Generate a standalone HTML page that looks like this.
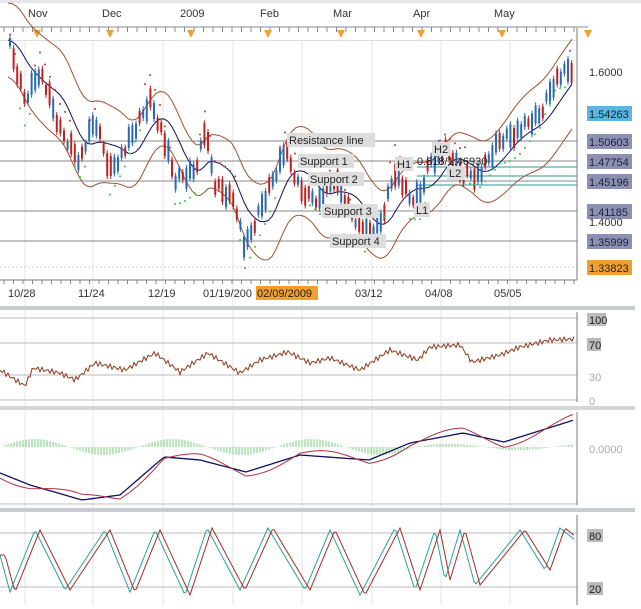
<!DOCTYPE html><html><head><meta charset="utf-8"><style>
body{margin:0;background:#fff;width:641px;height:609px;overflow:hidden;font-family:"Liberation Sans",sans-serif}
svg{display:block}
text{font-family:"Liberation Sans",sans-serif}
</style></head><body>
<svg id="s" width="641" height="609" xmlns="http://www.w3.org/2000/svg">
<rect width="641" height="609" fill="#fff"/>
<rect x="0" y="0" width="641" height="3" fill="#e4e6ea"/>
<g font-size="11" fill="#333">
<text x="28" y="17">Nov</text><text x="102" y="17">Dec</text><text x="180" y="17">2009</text><text x="260" y="17">Feb</text><text x="333" y="17">Mar</text><text x="413" y="17">Apr</text><text x="494" y="17">May</text>
</g>
<line x1="0" y1="27" x2="588" y2="27" stroke="#888"/>
<g id="ticks" stroke="#888"></g>
<g fill="#f0a030" id="tri"></g>
<rect x="0" y="40" width="577" height="1" fill="#ddd"/>
<g id="vg" stroke="#e2e4ea"></g>
<g stroke="#888" stroke-width="1">
<line x1="0" y1="141" x2="577" y2="141"/><line x1="0" y1="161" x2="577" y2="161"/><line x1="0" y1="181" x2="577" y2="181"/><line x1="0" y1="211" x2="577" y2="211"/><line x1="0" y1="241" x2="577" y2="241"/>
</g>
<g stroke="#2a9a9a"><line x1="417" y1="167" x2="577" y2="167"/><line x1="417" y1="176" x2="577" y2="176"/><line x1="417" y1="185" x2="577" y2="185"/></g>
<line x1="0" y1="267" x2="577" y2="267" stroke="#ccc" stroke-dasharray="2,2"/>
<line x1="577" y1="28" x2="577" y2="280" stroke="#777"/>
<line x1="0" y1="280" x2="577" y2="280" stroke="#777"/>
<g id="main"></g>
<g font-size="11">
<rect x="287" y="133" width="88" height="14" fill="#ddd"/><text x="289" y="144" fill="#222">Resistance line</text>
<rect x="298" y="154" width="56" height="14" fill="#ddd"/><text x="300" y="165" fill="#222">Support 1</text>
<rect x="308" y="172" width="56" height="14" fill="#ddd"/><text x="310" y="183" fill="#222">Support 2</text>
<rect x="322" y="204" width="56" height="14" fill="#ddd"/><text x="324" y="215" fill="#222">Support 3</text>
<rect x="330" y="234" width="56" height="14" fill="#ddd"/><text x="332" y="245" fill="#222">Support 4</text>
<rect x="395" y="157" width="18" height="14" fill="#ddd"/><text x="397" y="168" fill="#222">H1</text>
<rect x="432" y="142" width="18" height="14" fill="#ddd"/><text x="434" y="153" fill="#222">H2</text>
<rect x="414" y="203" width="16" height="14" fill="#ddd"/><text x="416" y="214" fill="#222">L1</text>
<rect x="447" y="166" width="18" height="14" fill="#ddd"/><text x="449" y="177" fill="#222">L2</text>
<text x="417" y="165" fill="#222">0.618/1.46930</text>
</g>
<g font-size="11">
<text x="589" y="76" fill="#333">1.6000</text>
<rect x="587" y="106" width="45" height="15" fill="#5ab4e6"/><text x="589" y="118" fill="#223">1.54263</text>
<rect x="587" y="134" width="45" height="15" fill="#8c90b4"/><text x="589" y="146" fill="#223">1.50603</text>
<rect x="587" y="154" width="45" height="15" fill="#8c90b4"/><text x="589" y="166" fill="#223">1.47754</text>
<rect x="587" y="174" width="45" height="15" fill="#8c90b4"/><text x="589" y="186" fill="#223">1.45196</text>
<rect x="587" y="204" width="45" height="15" fill="#8c90b4"/><text x="589" y="216" fill="#223">1.41185</text>
<text x="589" y="226" fill="#333">1.4000</text>
<rect x="587" y="234" width="45" height="15" fill="#8c90b4"/><text x="589" y="246" fill="#223">1.35999</text>
<rect x="587" y="260" width="45" height="15" fill="#f0a030"/><text x="589" y="272" fill="#222">1.33823</text>
</g>
<g font-size="11" fill="#333">
<text x="8" y="297">10/28</text><text x="78" y="297">11/24</text><text x="148" y="297">12/19</text><text x="203" y="297">01/19/200</text>
<rect x="256" y="286" width="62" height="14" fill="#f0a030"/><text x="257" y="297" fill="#222">02/09/2009</text>
<text x="355" y="297">03/12</text><text x="425" y="297">04/08</text><text x="494" y="297">05/05</text>
</g>
<rect x="0" y="306" width="635" height="4" fill="#c8ccd2"/>
<rect x="0" y="406" width="635" height="4" fill="#d4d6dc"/>
<rect x="0" y="508" width="635" height="4" fill="#c8ccd2"/>
<g stroke="#bbb"><line x1="0" y1="318" x2="577" y2="318"/><line x1="0" y1="343" x2="577" y2="343"/><line x1="0" y1="375" x2="577" y2="375"/><line x1="0" y1="400" x2="577" y2="400"/>
<line x1="0" y1="504" x2="577" y2="504"/>
<line x1="0" y1="533" x2="577" y2="533"/><line x1="0" y1="587" x2="577" y2="587"/></g>
<g stroke="#777"><line x1="577" y1="312" x2="577" y2="402"/><line x1="577" y1="412" x2="577" y2="505"/><line x1="577" y1="515" x2="577" y2="605"/></g>
<g font-size="11">
<rect x="587" y="313" width="19" height="13" fill="#bbb"/><text x="589" y="324" fill="#222">100</text>
<rect x="587" y="338" width="14" height="13" fill="#bbb"/><text x="589" y="349" fill="#222">70</text>
<text x="589" y="381" fill="#aaa">30</text><text x="589" y="405" fill="#aaa">0</text>
<text x="589" y="453" fill="#aaa">0.0000</text>
<rect x="587" y="529" width="16" height="13" fill="#bbb"/><text x="589" y="540" fill="#222">80</text>
<rect x="587" y="582" width="16" height="13" fill="#bbb"/><text x="589" y="593" fill="#222">20</text>
</g>
<g id="ind"></g>
</svg>
<script>
var NS="http://www.w3.org/2000/svg";
function el(p,t,a){var e=document.createElementNS(NS,t);for(var k in a)e.setAttribute(k,a[k]);document.getElementById(p).appendChild(e);return e;}
for(var x=4;x<577;x+=9.5){el("ticks","line",{x1:x,y1:27,x2:x,y2:32});el("ticks","line",{x1:x,y1:280,x2:x,y2:284});}
[37,110,191,268,341,421,502,588].forEach(function(x){el("tri","polygon",{points:(x-4)+",30 "+(x+4)+",30 "+x+",38"});});
[25,93,163,233,302,372,441,510].forEach(function(x){el("vg","line",{x1:x,y1:40,x2:x,y2:605});});
var P=[[8,40],[25,100],[40,70],[60,130],[80,160],[95,120],[110,170],[125,150],[150,100],[160,125],[175,180],[195,170],[205,130],[215,185],[235,200],[245,250],[260,210],[285,150],[300,190],[320,200],[335,180],[350,210],[365,232],[380,225],[395,170],[410,200],[420,195],[430,160],[445,150],[460,172],[480,175],[500,140],[520,130],[540,115],[555,80],[570,70]];
function interp(L,x){if(x<=L[0][0])return L[0][1];for(var i=1;i<L.length;i++)if(x<=L[i][0]){var a=L[i-1],b=L[i];return a[1]+(b[1]-a[1])*(x-a[0])/(b[0]-a[0]);}return L[L.length-1][1];}
function f(x){return interp(P,x);}
function pl(pts,c,w,d){el(d||"main","polyline",{points:pts.map(function(p){return p[0]+","+p[1]}).join(" "),fill:"none",stroke:c,"stroke-width":w||1});}
var up=[],lo=[],ma=[];
for(var x=8;x<=575;x+=4){var s=0,n=0;for(var k=-30;k<=0;k+=3){s+=f(Math.max(8,x+k));n++;}var m=s/n;ma.push([x,m]);up.push([x,m-35-10*Math.sin(x/40)]);lo.push([x,m+35+10*Math.sin(x/40)]);}
pl(up,"#a0522d");pl(lo,"#a0522d");pl(ma,"#101060");
for(var x=10,i=0;x<575;x+=3.6,i++){var y=f(x)+((i*37)%11-5),h=8+(i*13)%16;var c=(f(x+3)>f(x))?"#b22":"#2a6ab0";if(i%4==0)c=(c=="#b22")?"#2a6ab0":"#b22";
el("main","line",{x1:x,y1:y-h/2-3,x2:x,y2:y+h/2+3,stroke:c});el("main","rect",{x:x-1,y:y-h/2,width:2,height:h,fill:c});}
for(var x=10;x<575;x+=5){var m=f(x);var d=(f(x+15)<m)?18:-18;el("main","circle",{cx:x,cy:m+d+8*Math.sin(x/13),r:1,fill:d>0?"#3c3":"#c33"});}
// RSI
var R=[[0,370],[25,386],[33,368],[60,373],[75,380],[95,363],[125,370],[155,353],[180,372],[208,353],[240,373],[260,360],[288,352],[310,363],[330,358],[360,370],[390,350],[418,360],[430,347],[460,345],[472,362],[500,355],[520,347],[550,340],[575,339]];
var r=[];for(var x=0;x<=575;x+=2){r.push([x,interp(R,x)+2.5*Math.sin(x*1.3)]);}pl(r,"#8b3a1a",1,"ind");
// MACD
for(var x=5;x<575;x+=3){var h=8*Math.sin(x/22)*(x<420?1:0.4);el("ind","line",{x1:x,y1:447,x2:x,y2:447-h,stroke:"#7c7"});}
var M=[[0,473],[30,485],[82,500],[120,495],[164,457],[200,460],[246,472],[300,455],[369,460],[410,443],[463,433],[504,442],[574,420]];
var m1=[],m2=[];for(var x=0;x<=575;x+=3){var b=interp(M,x);m1.push([x,b]);m2.push([x,b+6*Math.sin(x/20+1)]);}
pl(m1,"#101060",1.3,"ind");pl(m2,"#b03040",1,"ind");
// Stoch
var S=[[0,555],[10,592],[35,530],[65,590],[105,530],[130,592],[155,530],[185,595],[207,528],[240,590],[268,528],[305,590],[330,530],[360,595],[395,528],[415,590],[435,530],[445,580],[460,530],[475,585],[520,530],[545,570],[560,528],[575,540]];
var s1=[],s2=[];for(var x=0;x<=575;x+=2){s1.push([x,interp(S,x)]);s2.push([x,interp(S,x-5)]);}
pl(s1,"#2aa0a0",1,"ind");pl(s2,"#a03020",1,"ind");
</script>
</body></html>
